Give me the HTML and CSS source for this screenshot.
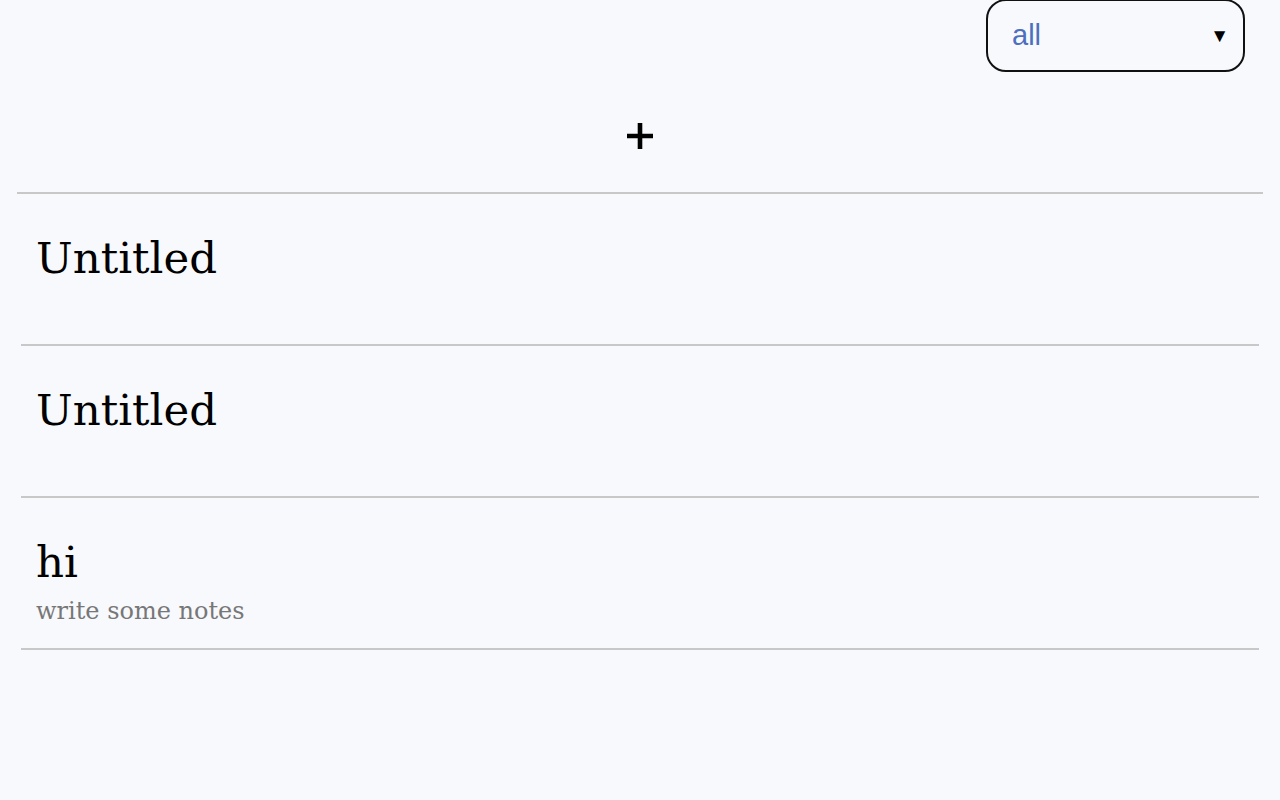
FILE: index.html
```html
<!DOCTYPE html>
<html>
<head>
<meta charset="utf-8">
<link rel="stylesheet" href="styles.css">
</head>
<body>
<div class="app">
  <div class="topbar">
    <div class="filter">
      <span class="filter-value">all</span>
      <span class="filter-arrow">▼</span>
    </div>
  </div>
  <div class="add-row">
    <button class="add-btn" aria-label="add">
      <svg width="26" height="26" viewBox="0 0 26 26"><path d="M13 0V26M0 13H26" stroke="#000" stroke-width="4.6"/></svg>
    </button>
  </div>
  <div class="divider"></div>
  <ul class="notes">
    <li class="note"><div class="note-title">Untitled</div></li>
    <li class="note"><div class="note-title">Untitled</div></li>
    <li class="note"><div class="note-title">hi</div><div class="note-body">write some notes</div></li>
  </ul>
</div>
</body>
</html>
```

FILE: styles.css
```css
html, body {
  margin: 0;
  padding: 0;
  background: #f7f9fd;
}
.app {
  width: 1280px;
  min-height: 800px;
}
.topbar {
  display: flex;
  justify-content: flex-end;
  padding-right: 35px;
}
.filter {
  box-sizing: border-box;
  width: 259px;
  height: 73px;
  margin-top: -1px;
  border: 2.5px solid #111;
  border-radius: 20px;
  display: flex;
  align-items: center;
  justify-content: space-between;
  padding: 0 14px 0 24px;
  font-family: "Liberation Sans", Arial, sans-serif;
}
.filter-value {
  color: #4d6fbf;
  font-size: 29px;
}
.filter-arrow {
  color: #000;
  font-size: 19px;
  line-height: 1;
}
.add-row {
  display: flex;
  justify-content: center;
  padding-top: 51px;
  height: 69px;
}
.add-btn {
  border: 0;
  background: transparent;
  padding: 0;
  width: 26px;
  height: 26px;
  display: block;
}
.add-btn svg { display: block; }
.divider {
  margin: 0 17px;
  height: 2px;
  background: #c8c8c8;
}
.notes {
  list-style: none;
  margin: 0 21px;
  padding: 0;
}
.note {
  box-sizing: border-box;
  height: 152px;
  border-bottom: 2px solid #c8c8c8;
  padding: 36px 0 0 15px;
  font-family: "DejaVu Serif", serif;
}
.note-title {
  font-size: 43.5px;
  line-height: 56px;
  color: #000;
}
.note-body {
  margin-top: 5px;
  font-size: 24px;
  line-height: 32px;
  color: #777;
}
```
